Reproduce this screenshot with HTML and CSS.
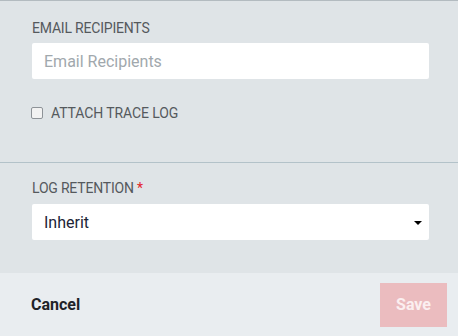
FILE: index.html
```html
<!DOCTYPE html>
<html>
<head>
<meta charset="utf-8">
<link rel="stylesheet" href="styles.css">
</head>
<body>
<div class="panel">
  <section class="section first">
    <div class="label">EMAIL RECIPIENTS</div>
    <div class="input"><span class="placeholder">Email Recipients</span></div>
    <div class="check-row">
      <span class="checkbox"></span>
      <span class="check-label">ATTACH TRACE LOG</span>
    </div>
  </section>
  <section class="section second">
    <div class="label">LOG RETENTION <span class="req">*</span></div>
    <div class="select"><span class="value">Inherit</span><span class="caret"></span></div>
  </section>
  <footer class="footer">
    <span class="cancel">Cancel</span>
    <span class="save">Save</span>
  </footer>
</div>
</body>
</html>
```
FILE: styles.css
```css
html, body {
  margin: 0;
  padding: 0;
  background: #dfe4e7;
  font-family: Roboto, "Noto Sans", Arial, sans-serif;
}
.panel {
  width: 458px;
  height: 336px;
  display: flex;
  flex-direction: column;
  background: #dfe4e7;
  border-top: 1px solid #b3bbc0;
  box-sizing: border-box;
}
.section {
  padding-left: 32px;
  padding-right: 29px;
}
.first {
  padding-top: 19px;
  padding-bottom: 41px;
}
.second {
  border-top: 1px solid #b3c2c9;
  padding-top: 17px;
  padding-bottom: 33px;
}
.label {
  font-size: 14px;
  letter-spacing: -0.2px;
  line-height: 16px;
  color: #55595d;
  margin-bottom: 7px;
}
.second .label {
  margin-bottom: 8px;
}
.req {
  color: #e3232a;
}
.input, .select {
  height: 36px;
  background: #fff;
  border-radius: 2px;
  display: flex;
  align-items: center;
  padding: 0 7px 0 12px;
  font-size: 16px;
}
.placeholder {
  color: #a1a8ad;
}
.select {
  justify-content: space-between;
}
.value {
  color: #1c2436;
  margin-top: 1px;
}
.caret {
  width: 0;
  height: 0;
  border-left: 4px solid transparent;
  border-right: 4px solid transparent;
  border-top: 4px solid #000;
  margin-top: 2px;
}
.check-row {
  margin-top: 26px;
  display: flex;
  align-items: center;
  gap: 8px;
  font-size: 14px;
  letter-spacing: -0.1px;
  line-height: 16px;
  color: #55595d;
}
.checkbox {
  width: 12px;
  height: 12px;
  box-sizing: border-box;
  border: 1px solid #8e9398;
  border-radius: 2px;
  background: #f2f2f2;
  margin-left: -1px;
}
.footer {
  flex: 1;
  background: #e9edf0;
  display: flex;
  align-items: center;
  justify-content: space-between;
  padding: 0 11px 0 31px;
}
.cancel {
  font-size: 16px;
  font-weight: 700;
  color: #1f2328;
}
.save {
  width: 67px;
  height: 44px;
  background: #ebbcbf;
  color: #fbeff0;
  font-size: 16px;
  font-weight: 700;
  display: flex;
  align-items: center;
  justify-content: center;
}
```
